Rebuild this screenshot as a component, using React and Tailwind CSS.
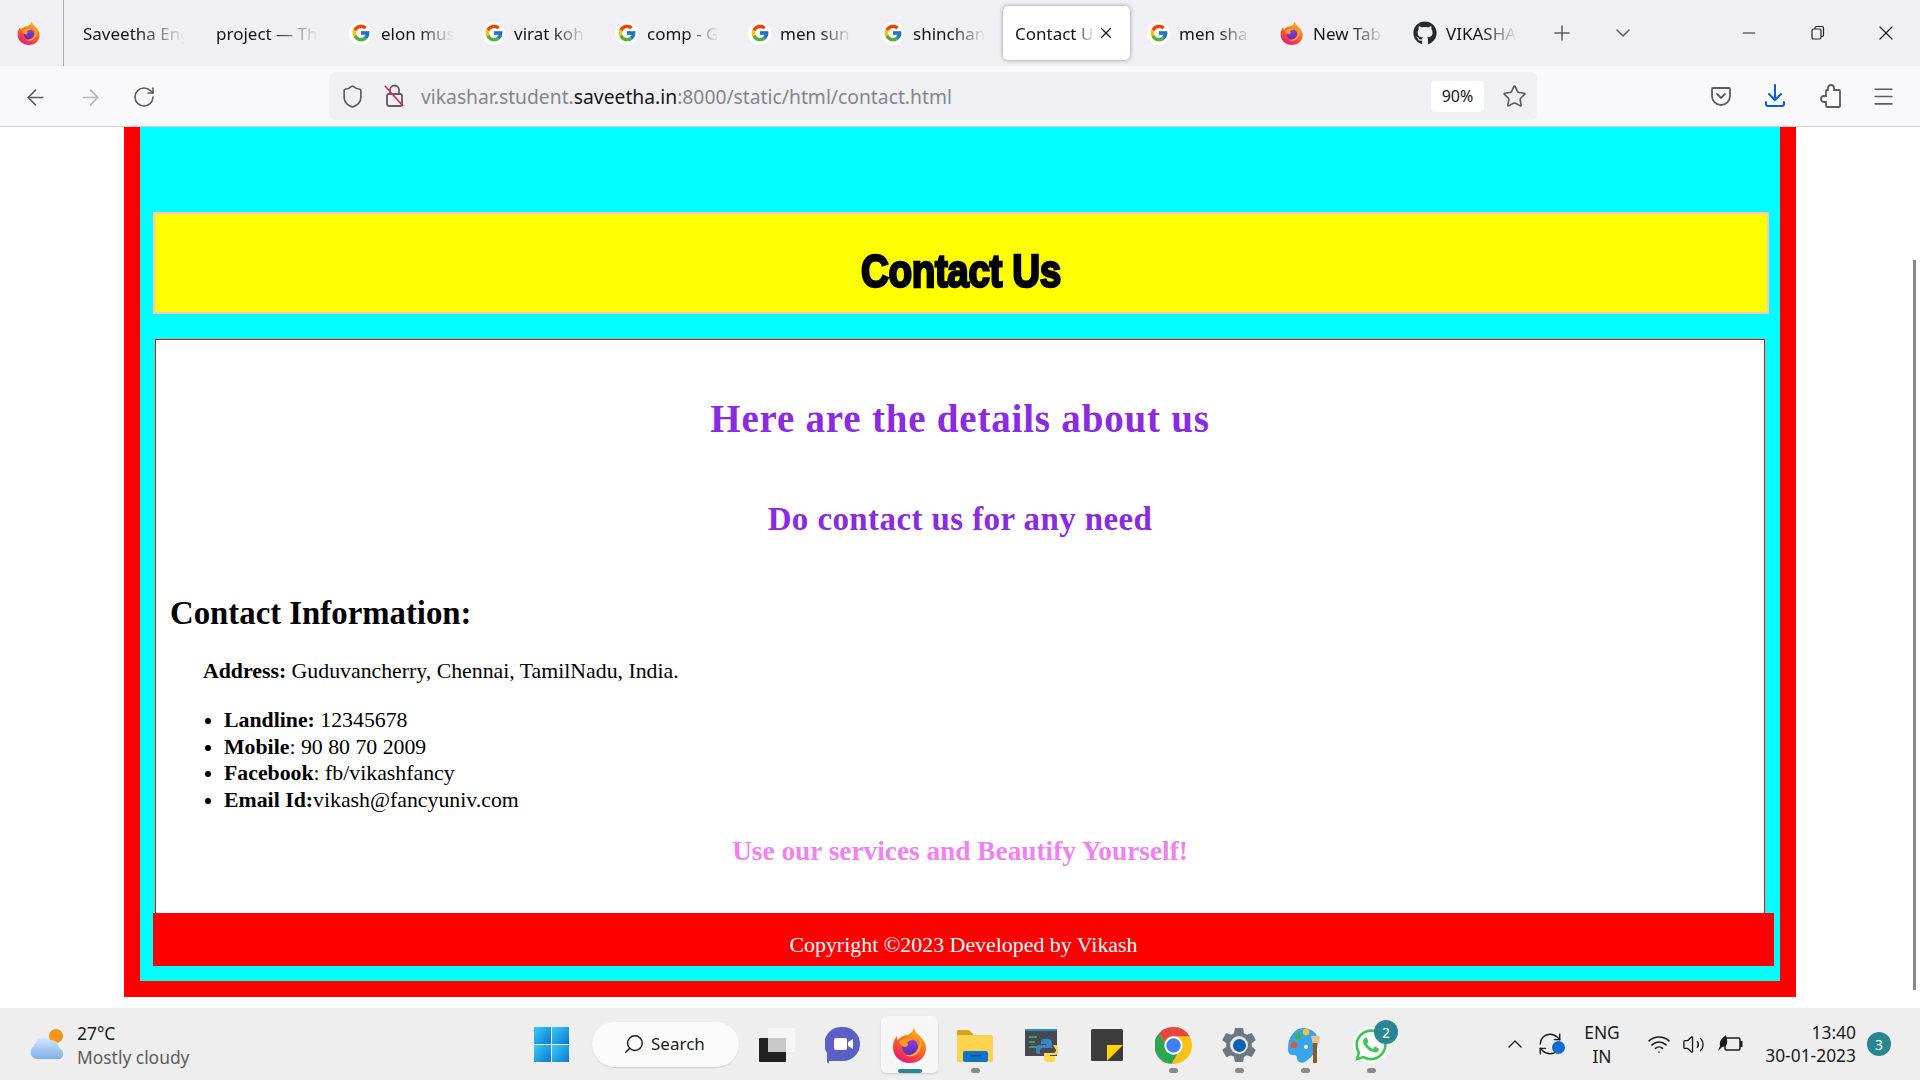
import {
  ArrowLeft,
  ArrowRight,
  ChevronDown,
  ChevronUp,
  Menu,
  Minus,
  Plus,
  RefreshCw,
  RotateCw,
  Search,
  Shield,
  Star,
  Volume2,
  Wifi,
  X,
} from "lucide-react";
import { FaGithub, FaWhatsapp } from "react-icons/fa";
import { FcGoogle } from "react-icons/fc";
import { IoSettingsSharp } from "react-icons/io5";

const uiFont = "font-['Noto_Sans','Open_Sans',sans-serif]";

const Firefox = ({ size = 24, id = "ff" }) => (
  <svg width={size} height={size} viewBox="0 0 36 36">
    <defs>
      <linearGradient id={`${id}a`} x1="0.8" y1="0" x2="0.3" y2="1">
        <stop offset="0" stopColor="#ffc61e" />
        <stop offset="0.4" stopColor="#ff7a1c" />
        <stop offset="0.8" stopColor="#f5364a" />
        <stop offset="1" stopColor="#e31587" />
      </linearGradient>
      <linearGradient id={`${id}b`} x1="0.5" y1="0" x2="0.5" y2="1">
        <stop offset="0" stopColor="#8f3fe0" />
        <stop offset="1" stopColor="#5a2bbd" />
      </linearGradient>
    </defs>
    <path
      d="M22 0c0 4 3 6 6 9 4 4 6 8 6 12 0 9-7 15-16 15S1 30 1 20c0-4 1-8 4-11 0 2 0 3 1 4 2-3 6-5 9-5 3-1 6-3 7-8z"
      fill={`url(#${id}a)`}
    />
    <circle cx="18" cy="20" r="8" fill={`url(#${id}b)`} />
    <path d="M7 15c3-4 10-5 15-2-4 0-6 1-7 3 2 1 1 3-1 4-3 0-6-2-7-5z" fill="#ff9a1f" />
    <path d="M28 12c2 4 2 9-1 13-3 4-9 6-14 3 5 1 10-1 12-5 2-3 3-7 3-11z" fill="#ffb52e" opacity="0.9" />
  </svg>
);

const GoogleIcon = () => (
  <span className="flex h-[23px] w-[23px] shrink-0 items-center justify-center rounded-full bg-white">
    <FcGoogle size={20} />
  </span>
);

const Tab = ({ icon, label }) => (
  <div className="flex h-[54px] w-[133px] shrink-0 items-center gap-[9px] pl-[13px] pr-[12px]">
    {icon}
    <span className="min-w-0 flex-1 overflow-hidden whitespace-nowrap pt-[2px] text-[17px] text-[#15141a] [mask-image:linear-gradient(to_right,black_50%,transparent_95%)]">
      {label}
    </span>
  </div>
);

const TabBar = () => (
  <div className="flex h-[66px] items-center bg-[#f0f0f4]">
    <div className="flex h-full w-[64px] shrink-0 items-center justify-center border-r border-[#a9a9ad] pr-[6px]">
      <Firefox id="ffmain" />
    </div>
    <div className="ml-[6px] flex items-center">
      <Tab label="Saveetha Eng" />
      <Tab label="project — Th" />
      <Tab icon={<GoogleIcon />} label="elon mus" />
      <Tab icon={<GoogleIcon />} label="virat koh" />
      <Tab icon={<GoogleIcon />} label="comp - G" />
      <Tab icon={<GoogleIcon />} label="men sun" />
      <Tab icon={<GoogleIcon />} label="shinchan" />
      <div className="ml-[2px] mr-[4px] flex h-[54px] w-[127px] shrink-0 items-center rounded-[5px] bg-white pl-3 shadow-[0_0_4px_rgba(0,0,0,0.4)]">
        <span className="w-[80px] overflow-hidden whitespace-nowrap pt-[2px] text-[17px] text-[#15141a] [mask-image:linear-gradient(to_right,black_75%,transparent_100%)]">
          Contact U
        </span>
        <X size={18} strokeWidth={1.75} className="ml-[2px] text-[#15141a]" />
      </div>
      <Tab icon={<GoogleIcon />} label="men sha" />
      <Tab icon={<Firefox id="ffnew" />} label="New Tab" />
      <Tab icon={<FaGithub size={24} className="shrink-0 text-[#24292f]" />} label="VIKASHA" />
    </div>
    <Plus size={24} strokeWidth={1.5} className="ml-[17px] text-[#5b5b66]" />
    <ChevronDown size={24} strokeWidth={1.5} className="ml-[37px] text-[#5b5b66]" />
    <div className="ml-auto flex items-center">
      <Minus size={20} strokeWidth={1.25} className="mr-[51px] text-[#222]" />
      <svg width="16" height="16" viewBox="0 0 16 16" fill="none" stroke="#222" strokeWidth="1.2" className="mr-[48px]">
        <rect x="2" y="4" width="9" height="10" rx="1.5" fill="#f0f0f4" />
        <path d="M5 4V3a1.5 1.5 0 0 1 1.5-1.5H12A1.5 1.5 0 0 1 13.500 3v7a1.500 1.500 0 0 1-1.500 1.500h-1" />
      </svg>
      <X size={24} strokeWidth={1.25} className="mr-[22px] text-[#222]" />
    </div>
  </div>
);

const Toolbar = () => (
  <div className="flex h-[61px] items-center border-b border-[#cfcfd8] bg-[#f9f9fb]">
    <ArrowLeft size={25} strokeWidth={1.6} className="ml-[23px] mt-[2px] text-[#5b5b66]" />
    <ArrowRight size={25} strokeWidth={1.6} className="ml-[30px] mt-[2px] text-[#b4b4ba]" />
    <RotateCw size={24} strokeWidth={1.6} className="ml-[29px] mt-[2px] text-[#5b5b66]" />
    <div className="ml-[173px] flex h-[48px] w-[1208px] items-center rounded-[6px] bg-[#f0f0f4]">
      <Shield size={25} strokeWidth={1.6} className="ml-[11px] text-[#5b5b66]" />
      <svg width="24" height="26" viewBox="0 0 24 26" fill="none" className="ml-[17px]">
        <rect x="5" y="11" width="15" height="12" rx="2" stroke="#5b5b66" strokeWidth="1.8" />
        <path d="M8 11V7a4.500 4.500 0 0 1 9 0v4" stroke="#5b5b66" strokeWidth="1.8" />
        <path d="M3 3l18 20" stroke="#e22850" strokeWidth="1.8" />
      </svg>
      <span className="ml-[15px] whitespace-nowrap pt-[2px] text-[19.3px] text-[#85858d]">
        vikashar.student.<span className="text-[#15141a]">saveetha.in</span>:8000/static/html/contact.html
      </span>
      <span className="ml-auto flex h-[31px] w-[53px] items-center justify-center rounded-[4px] bg-white text-[16px] text-[#15141a]">
        90%
      </span>
      <Star size={25} strokeWidth={1.6} className="ml-[18px] mr-[10px] text-[#5b5b66]" />
    </div>
    <svg width="24" height="24" viewBox="0 0 24 24" fill="none" stroke="#5b5b66" strokeWidth="1.8" className="ml-[172px]">
      <path d="M4 4h16a1 1 0 0 1 1 1v7a9 9 0 0 1-18 0V5a1 1 0 0 1 1-1z" />
      <path d="M8 10l4 4 4-4" strokeLinecap="round" />
    </svg>
    <svg width="24" height="26" viewBox="0 0 24 26" fill="none" stroke="#0060df" strokeWidth="2" className="ml-[30px]">
      <path d="M12 2v15M6 11l6 6 6-6M3 19v2a2 2 0 0 0 2 2h14a2 2 0 0 0 2-2v-2" strokeLinecap="round" />
    </svg>
    <svg width="24" height="26" viewBox="0 0 24 26" fill="none" stroke="#5b5b66" strokeWidth="1.8" className="ml-[32px]">
      <path d="M12 2c2 0 3 1.500 3 3v2h5a1 1 0 0 1 1 1v15a1 1 0 0 1-1 1H8a1 1 0 0 1-1-1v-4H5a3 3 0 0 1 0-6h2V8a1 1 0 0 1 1-1h1V5c0-1.500 1-3 3-3z" />
    </svg>
    <Menu size={25} strokeWidth={1.6} className="ml-[28px] text-[#5b5b66]" />
  </div>
);

const Page = () => (
  <main className="relative h-[881px] bg-white font-['Liberation_Serif',serif] text-black">
    <div className="ml-[124px] h-[870px] w-[1672px] border-x-[16px] border-b-[16px] border-[#ff0000] bg-[#00ffff] pt-[85px]">
      <header className="ml-[13px] flex h-[102px] w-[1616px] justify-center border-2 border-[#ffc0cb] bg-[#ffff00] pt-[30px]">
        <h1 className="origin-center scale-x-[0.84] whitespace-nowrap font-['Liberation_Sans',sans-serif] text-[46px] leading-[54px] font-bold tracking-[-0.5px] [-webkit-text-stroke:2.5px_black]">
          Contact Us
        </h1>
      </header>
      <section className="ml-[15px] mt-[25px] h-[574px] w-[1610px] border-x border-t border-[#ff0000] bg-white">
        <h2 className="pt-[56px] text-center text-[39px] leading-[45px] font-bold tracking-[0.8px] text-[#8a2be2]">
          Here are the details about us
        </h2>
        <h3 className="mt-[59px] text-center text-[33px] leading-[38px] font-bold tracking-[0.4px] text-[#8a2be2]">
          Do contact us for any need
        </h3>
        <h3 className="ml-[14px] mt-[57px] text-[32.8px] leading-[37px] font-bold">Contact Information:</h3>
        <p className="ml-[47px] mt-[26px] text-[21.8px] leading-[27px]">
          <b>Address:</b> Guduvancherry, Chennai, TamilNadu, India.
        </p>
        <ul className="ml-[68px] mt-[22px] list-disc text-[21.8px] leading-[26.6px]">
          <li>
            <b>Landline:</b> 12345678
          </li>
          <li>
            <b>Mobile</b>: 90 80 70 2009
          </li>
          <li>
            <b>Facebook</b>: fb/vikashfancy
          </li>
          <li>
            <b>Email Id:</b>vikash@fancyuniv.com
          </li>
        </ul>
        <h4 className="mt-[23px] text-center text-[27.3px] leading-[30px] font-bold text-[#ee82ee]">
          Use our services and Beautify Yourself!
        </h4>
      </section>
      <footer className="ml-[13px] flex h-[53px] w-[1621px] items-center justify-center bg-[#ff0000] pt-[12px] text-[21.9px] text-white">
        Copyright ©2023 Developed by Vikash
      </footer>
    </div>
    {/* overlay scrollbar */}
    <div className="absolute left-[1913px] top-[133px] h-[730px] w-[3px] bg-[#8a8a8a]" />
  </main>
);

const TaskIcon = ({ children, dot, badge }) => (
  <div className="relative flex h-[57px] w-[66px] shrink-0 flex-col items-center pt-[9px]">
    <div className="flex h-[40px] items-center justify-center">{children}</div>
    {dot && <span className="mt-[3px] block h-[5px] w-[9px] rounded-full bg-[#8a8a8a]" />}
    {badge && (
      <span className="absolute left-[36px] top-[4px] flex h-[24px] w-[24px] items-center justify-center rounded-full bg-[#2a8593] text-[14px] text-white">
        {badge}
      </span>
    )}
  </div>
);

const WeatherIcon = () => (
  <svg width="38" height="36" viewBox="0 0 38 36">
    <defs>
      <linearGradient id="cl" x1="0" y1="0" x2="0" y2="1">
        <stop offset="0" stopColor="#d5e6fa" />
        <stop offset="1" stopColor="#7fb0ea" />
      </linearGradient>
    </defs>
    <circle cx="27" cy="10" r="7" fill="#f7941d" />
    <path d="M8 33a7 7 0 0 1-3-13 10 10 0 0 1 16-6 8 8 0 0 1 9 8 6 6 0 0 1 1 11z" fill="url(#cl)" />
  </svg>
);

const TaskBar = () => (
  <div className={`flex h-[72px] items-center bg-[#eeeeee] ${uiFont}`}>
    <div className="ml-[29px] flex w-[505px] items-center">
      <WeatherIcon />
      <div className="ml-[10px] pt-[2px] text-[17.4px] leading-[24px]">
        <div className="text-[#1b1b1b]">27°C</div>
        <div className="text-[#5d5d5d]">Mostly cloudy</div>
      </div>
    </div>
    <svg width="35" height="35" viewBox="0 0 35 35">
      <defs>
        <linearGradient id="win" x1="0" y1="0" x2="1" y2="1">
          <stop offset="0" stopColor="#3ccbf4" />
          <stop offset="1" stopColor="#0a78d4" />
        </linearGradient>
      </defs>
      <rect width="17" height="17" fill="url(#win)" />
      <rect x="18" width="17" height="17" fill="url(#win)" />
      <rect y="18" width="17" height="17" fill="url(#win)" />
      <rect x="18" y="18" width="17" height="17" fill="url(#win)" />
    </svg>
    <div className="ml-[23px] flex h-[45px] w-[147px] items-center rounded-full bg-[#fbfbfb] pl-[31px] shadow-[0_1px_1px_rgba(0,0,0,0.12)]">
      <Search size={22} strokeWidth={1.6} className="-scale-x-100 text-[#1b1b1b]" />
      <span className="ml-[6px] text-[17px] text-[#1b1b1b]">Search</span>
    </div>
    <div className="ml-[5px] mt-[1px] flex items-center">
      <TaskIcon>
        <svg width="36" height="34" viewBox="0 0 36 34">
          <rect x="0" y="10" width="27" height="24" rx="1" fill="#222" />
          <rect x="9" y="0" width="27" height="24" rx="1" fill="#f6f6f6" opacity="0.9" />
          <rect x="9" y="10" width="18" height="14" fill="#c8c8c8" />
        </svg>
      </TaskIcon>
      <TaskIcon>
        <svg width="36" height="38" viewBox="0 0 36 38">
          <path d="M18 1a17 17 0 0 1 0 34H4v2c0 1-2 0-2-2v-8A17 17 0 0 1 18 1z" fill="#5b5fc7" />
          <rect x="9" y="12" width="13" height="12" rx="2" fill="#fff" />
          <path d="M23 16l5-3v10l-5-3z" fill="#fff" />
        </svg>
      </TaskIcon>
      <div className="ml-[5px] flex h-[57px] w-[57px] flex-col items-center justify-between rounded-[5px] bg-[#f6f6f6] pt-[11px] shadow-[0_1px_2px_rgba(0,0,0,0.15)]">
        <Firefox id="fftask" size={36} />
        <span className="block h-[4px] w-[24px] rounded-[2px] bg-[#2a8593]" />
      </div>
      <div className="ml-[4px] flex">
        <TaskIcon dot>
          <svg width="36" height="33" viewBox="0 0 36 33">
            <path d="M0 3a2 2 0 0 1 2-2h10l4 4v6H0z" fill="#d9a21b" />
            <path d="M0 6h34a2 2 0 0 1 2 2v23a2 2 0 0 1-2 2H0z" fill="#fcd34f" />
            <rect x="6" y="22" width="25" height="11" rx="2" fill="#0f74c8" />
            <rect x="13" y="26" width="11" height="1.500" fill="#0a4f92" />
          </svg>
        </TaskIcon>
        <TaskIcon>
          <svg width="33" height="33" viewBox="0 0 33 33">
            <rect x="0" y="0" width="32" height="27" fill="#46494f" />
            <rect x="0" y="0" width="32" height="2" fill="#2e8ad0" />
            <path d="M4 8h8M4 13h6M4 18h9" stroke="#4cae6a" strokeWidth="1.5" />
            <path d="M20 10h3a4 4 0 0 1 4 4v5h-9a3 3 0 0 0-3 3v3h-2a3 3 0 0 1-2-3v-3a3 3 0 0 1 3-3h7v-1h-5v-2a3 3 0 0 1 4-3z" fill="#3c82c4" />
            <path d="M28 16h2a3 3 0 0 1 3 3v4a3 3 0 0 1-3 3h-5v1h5v2a3 3 0 0 1-4 4h-3a4 4 0 0 1-4-4v-5h9a3 3 0 0 0 3-3z" fill="#ffd84a" />
          </svg>
        </TaskIcon>
        <TaskIcon>
          <svg width="32" height="32" viewBox="0 0 32 32">
            <rect width="32" height="32" rx="1.500" fill="#3c3c3c" />
            <path d="M16 16h16L16 32z" fill="#ffd400" />
          </svg>
        </TaskIcon>
        <TaskIcon dot>
          <svg width="37" height="37" viewBox="0 0 36 36">
            <circle cx="18" cy="18" r="18" fill="#fbc116" />
            <path d="M18 0a18 18 0 0 1 15.600 9H18a9 9 0 0 0-8.500 6L4 6a18 18 0 0 1 14-6z" fill="#e8453c" />
            <path d="M4 6l9 15a9 9 0 0 0 10 3l-7 12A18 18 0 0 1 4 6z" fill="#2ca64f" />
            <circle cx="18" cy="18" r="9" fill="#fff" />
            <circle cx="18" cy="18" r="7" fill="#3f7ff0" />
          </svg>
        </TaskIcon>
        <TaskIcon dot>
          <span className="relative flex items-center justify-center">
            <IoSettingsSharp size={38} className="text-[#6d7780]" />
            <span className="absolute h-[18px] w-[18px] rounded-full bg-[#e4e7ea]" />
            <span className="absolute h-[13px] w-[13px] rounded-full bg-[#0f5fb0]" />
          </span>
        </TaskIcon>
        <TaskIcon dot>
          <svg width="34" height="36" viewBox="0 0 34 36">
            <path d="M15 1c8 0 15 5 15 13 0 10-6 16-13 21-5 2-8-1-8-4 0-3-2-3-5-3-3 0-4-3-4-7C0 10 7 1 15 1z" fill="#36a5ea" />
            <circle cx="18" cy="5" r="3.200" fill="#f4c430" />
            <circle cx="10" cy="9" r="3.200" fill="#4caf50" />
            <circle cx="6" cy="18" r="3.200" fill="#e4572e" />
            <circle cx="18" cy="20" r="2" fill="#fff" />
            <path d="M23 9h9l-1.500 7h-6z" fill="#e3c08f" />
            <rect x="25" y="16" width="4" height="20" fill="#8a5a2b" />
          </svg>
        </TaskIcon>
        <TaskIcon dot badge="2">
          <span className="flex h-[36px] w-[36px] items-center justify-center rounded-full bg-white">
            <FaWhatsapp size={36} className="text-[#3ec55a]" />
          </span>
        </TaskIcon>
      </div>
    </div>
    <ChevronUp size={24} strokeWidth={1.4} className="ml-[99px] text-[#1b1b1b]" />
    <span className="relative ml-[10px] flex">
      <RefreshCw size={26} strokeWidth={1.3} className="text-[#1b1b1b]" />
      <span className="absolute bottom-[3px] right-[-2px] h-[13px] w-[13px] rounded-full bg-[#0f6cd4]" />
    </span>
    <div className="ml-[18px] w-[42px] text-center text-[17.4px] leading-[24px] text-[#1b1b1b]">
      <div>ENG</div>
      <div>IN</div>
    </div>
    <Wifi size={24} strokeWidth={1.6} className="ml-[24px] text-[#1b1b1b]" />
    <Volume2 size={23} strokeWidth={1.4} className="ml-[11px] text-[#1b1b1b]" />
    <svg width="26" height="22" viewBox="0 0 26 22" fill="none" className="ml-[12px]">
      <rect x="8" y="5" width="15" height="12" rx="1.500" stroke="#1b1b1b" strokeWidth="1.500" />
      <rect x="23" y="8" width="2.500" height="6" fill="#1b1b1b" />
      <path d="M9 2C5 5 2 8 3 13l-2 5 4-4c4 0 6-3 5-7z" fill="#1b1b1b" />
    </svg>
    <div className="ml-[11px] w-[102px] whitespace-nowrap text-right text-[17.4px] leading-[23px] text-[#1b1b1b]">
      <div>13:40</div>
      <div>30-01-2023</div>
    </div>
    <span className="ml-[11px] flex h-[24px] w-[24px] items-center justify-center rounded-full bg-[#2a8593] text-[14px] text-white">
      3
    </span>
  </div>
);

export default function App() {
  return (
    <div className={`h-[1080px] w-[1920px] overflow-hidden ${uiFont}`}>
      <TabBar />
      <Toolbar />
      <Page />
      <TaskBar />
    </div>
  );
}
